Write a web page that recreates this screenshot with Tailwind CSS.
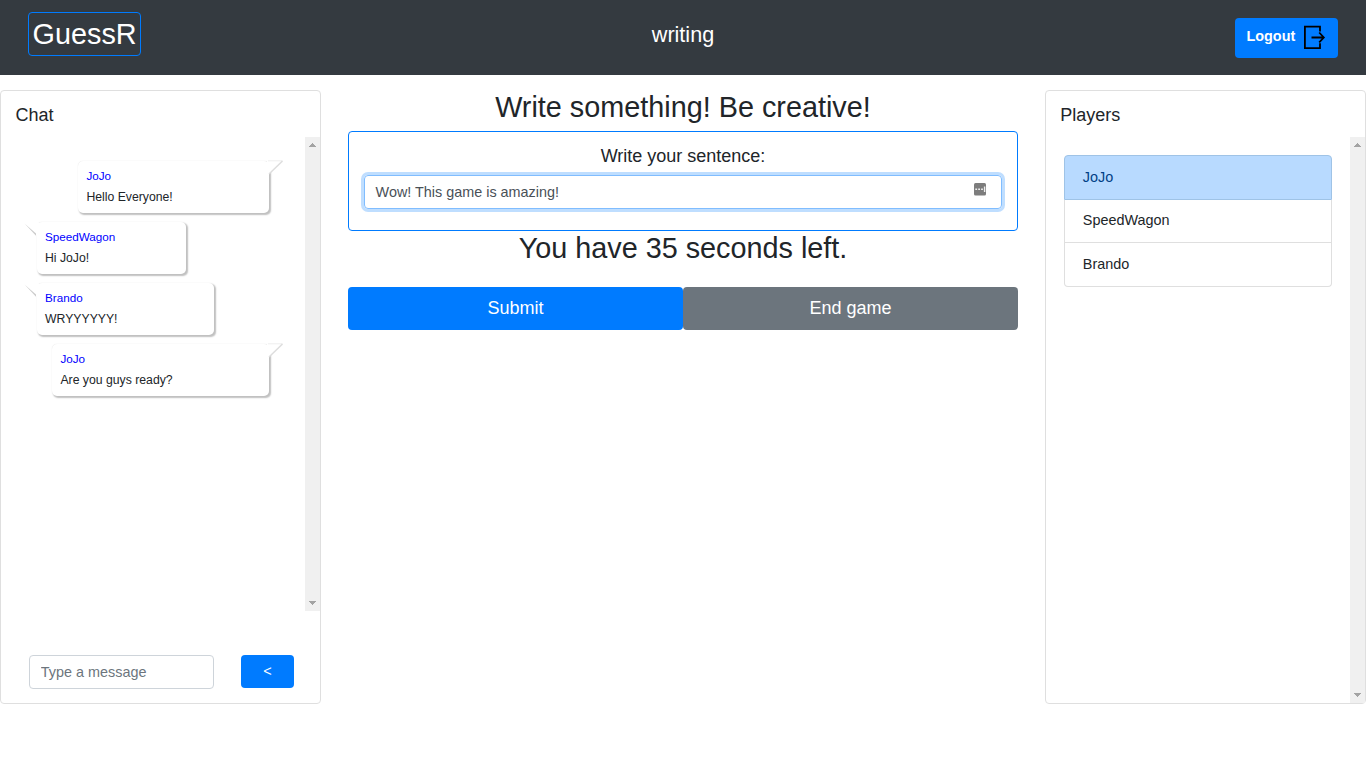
<!DOCTYPE html>
<html lang="en">
<head>
<meta charset="utf-8">
<title>GuessR</title>
<script src="https://cdn.jsdelivr.net/npm/@tailwindcss/browser@4"></script>
</head>
<body class="h-screen overflow-hidden bg-white font-['Liberation_Sans',Arial,sans-serif] text-[14.4px] leading-[21.6px] text-[#212529]">
<header class="grid h-[75px] grid-cols-3 items-start bg-[#343a40] px-7 text-white">
  <a class="mt-3 h-11 w-[113px] rounded-[4px] border border-[#007bff] pl-[3.6px] text-[28.8px] leading-[43px]">GuessR</a>
  <div class="mt-[18px] text-center text-[21.6px] leading-[33px]">writing</div>
  <button class="mt-[18px] flex h-10 w-[103px] justify-self-end rounded-[4px] bg-[#007bff] pl-[11.5px] font-bold leading-[36px]">Logout
    <svg class="ml-[7.5px] mt-[7px] h-[25px] w-[23px]" viewBox="0 0 23 25" fill="none" stroke="#000" stroke-width="1.8"><path d="M17 6.5V1.7H1.9V23.2H17V18.2M8.5 12.5H20.5M16.2 7.5L20.8 12.5L16.2 17.3"/></svg>
  </button>
</header>
<main class="mt-[15px] flex items-start justify-between">
  <section class="flex h-[614px] w-[321px] flex-col rounded-[4px] border border-[#dfdfdf]">
    <h5 class="h-[46px] pl-[14.4px] pt-[13px] text-[18px] leading-[22px]">Chat</h5>
    <div class="flex h-[474px] shrink-0">
      <div class="flex flex-1 flex-col gap-[9px] pl-9 pr-9 pt-6 text-[12.24px] leading-[18px]">
        <div class="relative h-[52px] w-[191px] self-end rounded-[5px] bg-white pl-[8.4px] pt-[6px] shadow-[1.5px_1.5px_1.5px_#c0c0c0,0_0_1px_#ddd]">
          <div class="text-[11.68px] text-[#00f]">JoJo</div><div class="mt-[3px]">Hello Everyone!</div>
          <svg class="absolute -right-[15px] -top-px" width="17" height="16" viewBox="0 0 17 16"><path d="M0 1H16L2 14H0Z" fill="#fff"/><path d="M1 .8H15.5" stroke="#eee"/><path d="M15.5 1L2 14" stroke="#ddd" stroke-width="1.5"/></svg>
        </div>
        <div class="relative h-[52px] w-[149px] rounded-[5px] bg-white pl-2 pt-[6px] shadow-[1.5px_1.5px_1.5px_#c0c0c0,0_0_1px_#ddd]">
          <div class="text-[11.68px] text-[#00f]">SpeedWagon</div><div class="mt-[3px]">Hi JoJo!</div>
          <svg class="absolute -left-[13px] top-0" width="15" height="16" viewBox="0 0 15 16"><path d="M1 1H15V13H12Z" fill="#fff"/><path d="M.5 1.5L12 11.5V13.8Z" fill="#cbcbcb"/></svg>
        </div>
        <div class="relative h-[52px] w-[177px] rounded-[5px] bg-white pl-2 pt-[6px] shadow-[1.5px_1.5px_1.5px_#c0c0c0,0_0_1px_#ddd]">
          <div class="text-[11.68px] text-[#00f]">Brando</div><div class="mt-[3px]">WRYYYYYY!</div>
          <svg class="absolute -left-[13px] top-0" width="15" height="16" viewBox="0 0 15 16"><path d="M1 1H15V13H12Z" fill="#fff"/><path d="M.5 1.5L12 11.5V13.8Z" fill="#cbcbcb"/></svg>
        </div>
        <div class="relative h-[52px] w-[217px] self-end rounded-[5px] bg-white pl-[8.4px] pt-[6px] shadow-[1.5px_1.5px_1.5px_#c0c0c0,0_0_1px_#ddd]">
          <div class="text-[11.68px] text-[#00f]">JoJo</div><div class="mt-[3px]">Are you guys ready?</div>
          <svg class="absolute -right-[15px] -top-px" width="17" height="16" viewBox="0 0 17 16"><path d="M0 1H16L2 14H0Z" fill="#fff"/><path d="M1 .8H15.5" stroke="#eee"/><path d="M15.5 1L2 14" stroke="#ddd" stroke-width="1.5"/></svg>
        </div>
      </div>
      <div class="flex w-[15px] flex-col items-center justify-between bg-[#f0f0f0] pb-[6px] pt-[6px]">
        <svg width="7" height="4" shape-rendering="crispEdges"><path d="M0 4L3.5 0L7 4Z" fill="#a3a3a3"/></svg>
        <svg width="7" height="4" shape-rendering="crispEdges"><path d="M0 0L3.5 4L7 0Z" fill="#a3a3a3"/></svg>
      </div>
    </div>
    <div class="mt-11 flex gap-[27px] pl-7">
      <input class="h-[34px] w-[185px] rounded-[4px] border border-[#ced4da] px-[10.8px] placeholder:text-[#6c757d]" placeholder="Type a message">
      <button class="h-[33px] w-[53px] rounded-[4px] bg-[#007bff] text-white">&lt;</button>
    </div>
  </section>

  <section class="w-[670px] text-center">
    <h2 class="h-[41px] text-[28.8px] leading-[34px]">Write something! Be creative!</h2>
    <div class="h-[100px] rounded-[4px] border border-[#007bff] px-[15px] pt-[13px]">
      <h5 class="text-[18px] leading-[22px]">Write your sentence:</h5>
      <div class="mt-[8px] flex h-[34px] items-center justify-between rounded-[4px] border border-[#80bdff] pl-[10.6px] pr-[14px] text-[#495057] shadow-[0_0_0_3px_rgba(0,123,255,0.25)]">
        <span class="pt-px">Wow! This game is amazing!</span>
        <svg class="-mt-[5px]" width="13" height="13"><rect width="12" height="12.5" rx="1.5" fill="#7d7d7d"/><path d="M1.3 6.3H3.1M4.2 6.3H6M7.1 6.3H8.9M10.6 3.5V9" stroke="#eee" stroke-width="1.4"/></svg>
      </div>
    </div>
    <h2 class="h-14 text-[28.8px] leading-[34px]">You have 35 seconds left.</h2>
    <div class="flex h-[43px] text-[18px] text-white">
      <button class="flex-1 rounded-[4px] bg-[#007bff]">Submit</button>
      <button class="flex-1 rounded-[4px] bg-[#6c757d]">End game</button>
    </div>
  </section>

  <section class="h-[614px] w-[321px] rounded-[4px] border border-[#dfdfdf]">
    <h5 class="h-[46px] pl-[14.2px] pt-[13px] text-[18px] leading-[22px]">Players</h5>
    <div class="flex h-[566px]">
      <ul class="flex-1 pl-[18px] pr-[18px] pt-[18px]">
        <li class="h-[45px] rounded-t-[4px] border border-[#9fc3e6] bg-[#b8daff] pl-[17.8px] leading-[43px] text-[#004085]">JoJo</li>
        <li class="h-[43px] border-x border-b border-[#dfdfdf] pl-[17.8px] leading-[40px]">SpeedWagon</li>
        <li class="h-[44px] rounded-b-[4px] border-x border-b border-[#dfdfdf] pl-[17.8px] leading-[42px]">Brando</li>
      </ul>
      <div class="flex w-[15px] flex-col items-center justify-between bg-[#f0f0f0] pb-[6px] pt-[6px]">
        <svg width="7" height="4" shape-rendering="crispEdges"><path d="M0 4L3.5 0L7 4Z" fill="#a3a3a3"/></svg>
        <svg width="7" height="4" shape-rendering="crispEdges"><path d="M0 0L3.5 4L7 0Z" fill="#a3a3a3"/></svg>
      </div>
    </div>
  </section>
</main>
</body>
</html>
